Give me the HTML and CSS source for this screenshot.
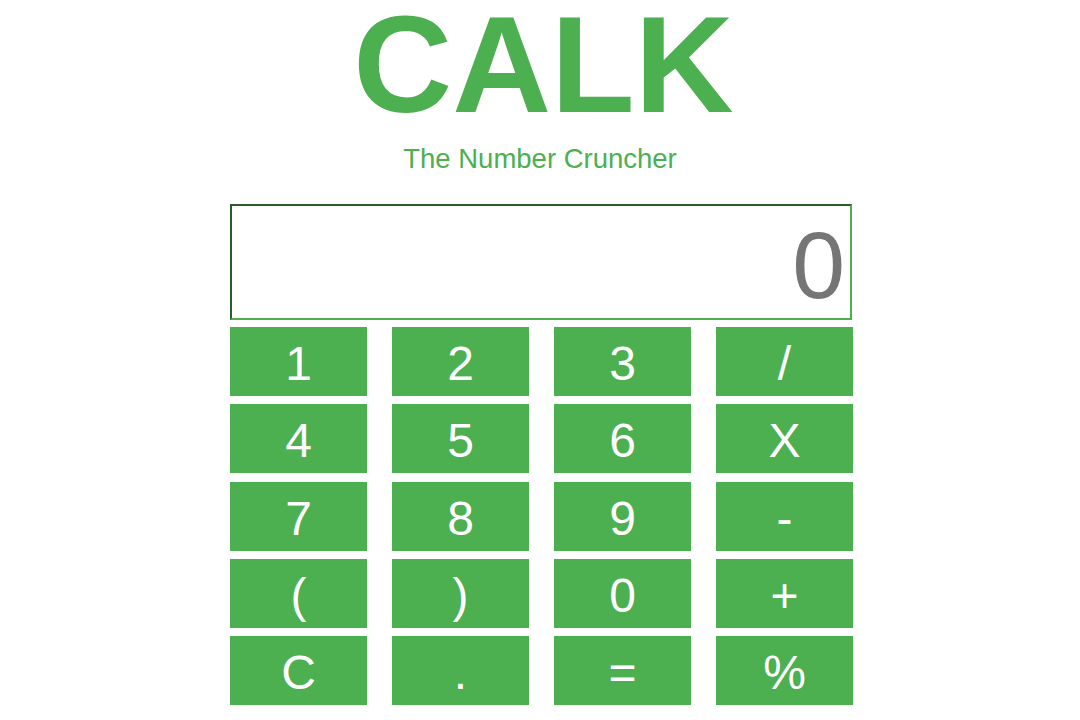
FILE: index.html
```html
<!DOCTYPE html>
<html lang="en">
<head>
<meta charset="utf-8">
<title>CALK</title>
<link rel="stylesheet" href="styles.css">
</head>
<body>
<main class="app">
  <h1 class="title">CALK</h1>
  <p class="subtitle">The Number Cruncher</p>
  <div class="calc">
    <div class="display">0</div>
    <div class="keys">
      <button class="key">1</button>
      <button class="key">2</button>
      <button class="key">3</button>
      <button class="key">/</button>
      <button class="key">4</button>
      <button class="key">5</button>
      <button class="key">6</button>
      <button class="key">X</button>
      <button class="key">7</button>
      <button class="key">8</button>
      <button class="key">9</button>
      <button class="key">-</button>
      <button class="key">(</button>
      <button class="key">)</button>
      <button class="key">0</button>
      <button class="key">+</button>
      <button class="key">C</button>
      <button class="key">.</button>
      <button class="key">=</button>
      <button class="key">%</button>
    </div>
  </div>
</main>
</body>
</html>
```
FILE: styles.css
```css
html, body {
  margin: 0;
  padding: 0;
  background: #ffffff;
}

body {
  font-family: "Liberation Sans", Arial, Helvetica, sans-serif;
  color: #4caf50;
}

.app {
  display: flex;
  flex-direction: column;
  align-items: center;
}

.title {
  margin: 0;
  padding-left: 7px;
  font-size: 137px;
  line-height: 130px;
  font-weight: bold;
  color: #4caf50;
}

.subtitle {
  margin: 15px 0 0;
  font-size: 27.5px;
  line-height: 28px;
  color: #4caf50;
}

.calc {
  width: 623px;
  margin-top: 31px;
  margin-left: 3px;
}

.display {
  box-sizing: border-box;
  width: 622px;
  height: 116px;
  border: 2px solid;
  border-color: #265f28 #4caf50 #4caf50 #265f28;
  padding: 6px 5px 0 0;
  font-size: 95px;
  line-height: 106px;
  text-align: right;
  color: #757575;
  overflow: hidden;
}

.keys {
  display: grid;
  grid-template-columns: repeat(4, 137px);
  grid-auto-rows: 69px;
  column-gap: 25px;
  row-gap: 8.25px;
  margin-top: 7px;
}

.key {
  box-sizing: border-box;
  margin: 0;
  border: 0;
  padding: 4px 0 0;
  background: #4caf50;
  color: #ffffff;
  font-family: "Liberation Sans", Arial, Helvetica, sans-serif;
  font-size: 48px;
  line-height: 65px;
  text-align: center;
  cursor: pointer;
}
```
